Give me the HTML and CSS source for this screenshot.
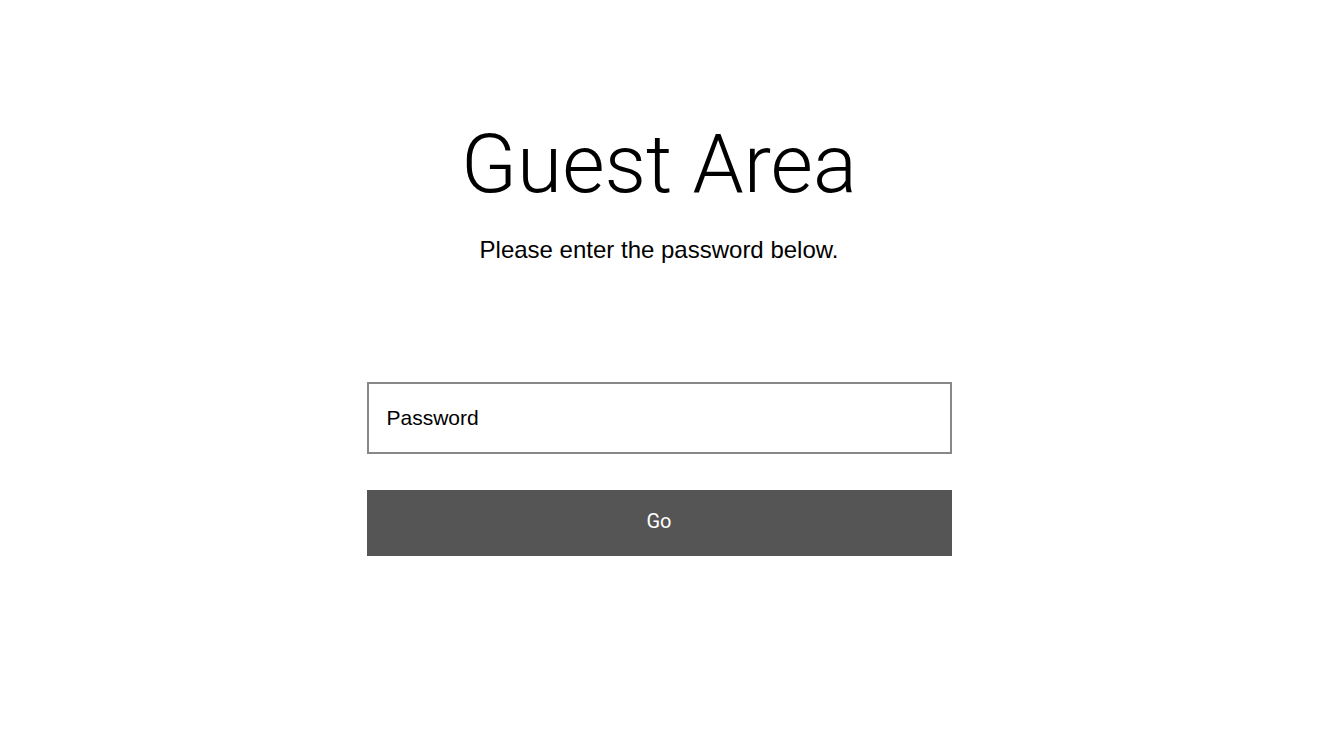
FILE: index.html
```html
<!DOCTYPE html>
<html lang="en">
  <head>
    <meta charset="UTF-8" />
    <meta name="viewport" content="width=device-width, initial-scale=1.0" />
    <title>Guest Area</title>
    <link rel="stylesheet" href="styles.css">
  </head>
  <body>
    <div id="main">
      <h1 class="title">Guest Area</h1>
      <p class="subtitle">Please enter the password below.</p>

      <form id="guestForm" class="form">
        <input type="password" class="field" placeholder="Password" />
        <button type="submit" class="go">Go</button>
      </form>
    </div>
  </body>
</html>
```

FILE: styles.css
```css
body {
  margin: 0;
  background: #fff;
  font-family: "Liberation Sans", Arial, sans-serif;
}
#main {
  display: flex;
  flex-direction: column;
  align-items: center;
  padding-top: 116px;
}
.title {
  margin: 0;
  font-family: Roboto, "DejaVu Sans", sans-serif;
  font-weight: 300;
  font-size: 82px;
  line-height: 96px;
  color: #000;
}
.subtitle {
  margin: 24px 0 0;
  font-size: 24px;
  line-height: 28px;
  color: #000;
}
.form {
  display: flex;
  flex-direction: column;
  gap: 36px;
  width: 585px;
  margin-top: 118px;
}
.field {
  box-sizing: border-box;
  height: 72px;
  padding: 0 18px;
  border: 2px solid #888;
  font-family: "Liberation Sans", Arial, sans-serif;
  font-size: 21px;
  outline: none;
}
.field::placeholder {
  color: #000;
}
.go {
  height: 66px;
  padding: 0 0 4px;
  border: none;
  background: #555;
  color: #fff;
  font-family: Roboto, sans-serif;
  font-weight: 400;
  font-size: 20px;
  cursor: pointer;
}
```
